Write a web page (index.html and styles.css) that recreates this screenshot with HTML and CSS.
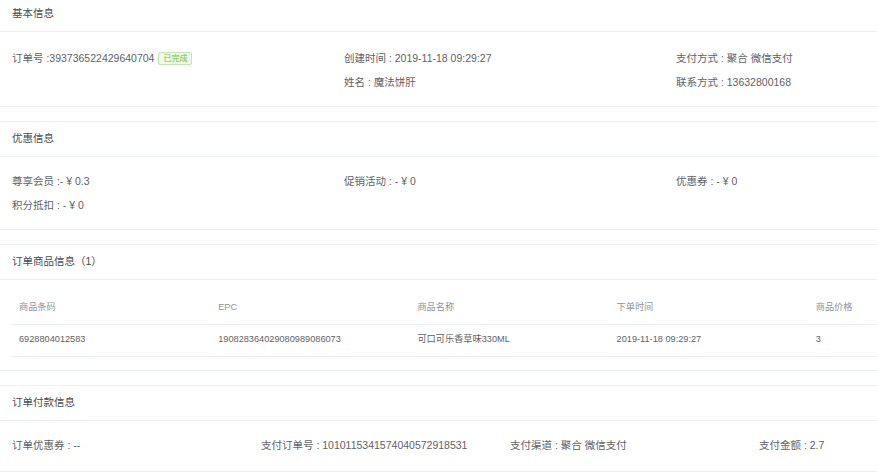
FILE: index.html
```html
<!DOCTYPE html>
<html>
<head>
<meta charset="utf-8" />
<title>订单详情</title>
<link rel="stylesheet" href="styles.css">
</head>
<body>
<div class="page">
	<div class="card base">
		<div class="card_head">基本信息</div>
		<div class="card_body">
			<div class="info cols3">
				<div class="item">订单号 :393736522429640704<span class="tag">已完成</span></div>
				<div class="item">创建时间 : 2019-11-18 09:29:27</div>
				<div class="item">支付方式 : 聚合 微信支付</div>
				<div class="item"></div>
				<div class="item">姓名 : 魔法饼肝</div>
				<div class="item">联系方式 : 13632800168</div>
			</div>
		</div>
	</div>

	<div class="card">
		<div class="card_head">优惠信息</div>
		<div class="card_body">
			<div class="info cols3">
				<div class="item">尊享会员 :- ¥ 0.3</div>
				<div class="item">促销活动 : - ¥ 0</div>
				<div class="item">优惠券 : - ¥ 0</div>
				<div class="item">积分抵扣 : - ¥ 0</div>
			</div>
		</div>
	</div>

	<div class="card goods">
		<div class="card_head">订单商品信息（1）</div>
		<div class="card_body">
			<table class="goods_table">
				<thead>
					<tr>
						<th>商品条码</th>
						<th>EPC</th>
						<th>商品名称</th>
						<th>下单时间</th>
						<th>商品价格</th>
					</tr>
				</thead>
				<tbody>
					<tr>
						<td>6928804012583</td>
						<td>190828364029080989086073</td>
						<td>可口可乐香草味330ML</td>
						<td>2019-11-18 09:29:27</td>
						<td>3</td>
					</tr>
				</tbody>
			</table>
		</div>
	</div>

	<div class="card pay">
		<div class="card_head">订单付款信息</div>
		<div class="card_body">
			<div class="info cols4">
				<div class="item">订单优惠券 : --</div>
				<div class="item">支付订单号 : 1010115341574040572918531</div>
				<div class="item">支付渠道 : 聚合 微信支付</div>
				<div class="item">支付金额 : 2.7</div>
			</div>
		</div>
	</div>
</div>
</body>
</html>
```

FILE: styles.css
```css
*{margin:0;padding:0;box-sizing:border-box;}
html{overflow:hidden;background:#fff;}
body{font:10.5px/1.5 "Liberation Sans","Noto Sans CJK SC",sans-serif;color:#606266;background:#fff;}
.page{width:1020px;margin-top:-4px;}

.card{background:#fff;border-top:1px solid #ebeef5;border-bottom:1px solid #ebeef5;}
.card + .card{margin-top:14px;}
.card_head{height:35px;line-height:33px;padding:0 12px;color:#494b4f;border-bottom:1px solid #ebeef5;}
.card_body{padding:12px 12px 12px;}
.base .card_body{padding-top:14px;}
.goods .card_body{padding-bottom:13px;}
.pay .card_body{padding-bottom:14px;}

.info{display:grid;}
.cols3{grid-template-columns:repeat(3,1fr);}
.cols4{grid-template-columns:repeat(4,1fr);}
.item{height:24px;line-height:24px;white-space:nowrap;}

.tag{display:inline-block;vertical-align:1px;height:13px;line-height:11px;margin-left:4px;padding:0 4px;font-size:8px;color:#67c23a;background:#f0f9eb;border:1px solid #c2e7b0;border-radius:2px;}

.goods_table{width:996px;table-layout:fixed;border-collapse:collapse;font-size:9.2px;}
.goods_table th,.goods_table td{text-align:left;padding:0 7px;font-weight:normal;border-bottom:1px solid #ebeef5;white-space:nowrap;}
.goods_table th{height:32px;color:#909399;}
.goods_table td{height:32px;color:#606266;}
```
